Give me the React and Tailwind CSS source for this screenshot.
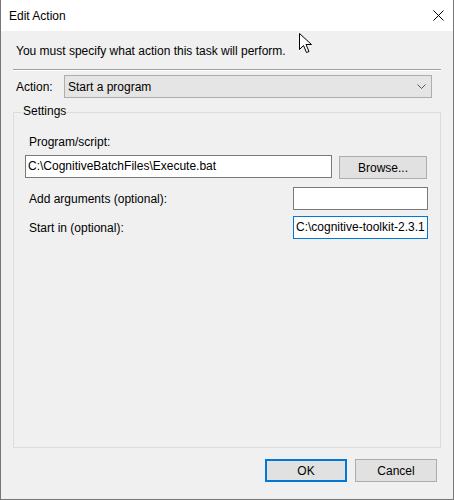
import React from 'react'

const font = { fontFamily: '"Liberation Sans", Arial, sans-serif' }

const TextBox = ({ value = '', focused = false, className = '' }) => (
  <div
    className={`h-[23px] bg-white border overflow-hidden whitespace-nowrap pl-[2px] leading-[21px] ${focused ? 'border-[#0078d7]' : 'border-[#7a7a7a]'} ${className}`}
  >
    {value}
  </div>
)

const Cursor = () => (
  <svg className="absolute left-[298px] top-[33px]" width="14" height="21" viewBox="0 0 14 21">
    <path
      d="M0.5 0.5 L0.5 16.5 L4.5 12.5 L7.5 19.5 L10 18.5 L7 11.5 L12.5 11.5 Z"
      fill="#fff"
      stroke="#000"
      strokeWidth="1"
      strokeLinejoin="miter"
    />
  </svg>
)

const App = () => {
  return (
    <div
      className="relative w-[454px] h-[500px] bg-[#f0f0f0] border-l border-r border-b border-[#777777] text-[12px] text-black overflow-hidden"
      style={font}
    >
      {/* title bar */}
      <div className="h-[31px] bg-white flex items-center justify-between pl-[8px] pr-[9px]">
        <span className="leading-[16px]">Edit Action</span>
        <svg width="11" height="11" viewBox="0 0 11 11">
          <path d="M0.5 0.5 L10.5 10.5 M10.5 0.5 L0.5 10.5" stroke="#000" strokeWidth="1" />
        </svg>
      </div>

      <div className="px-[12px]">
        <p className="mt-[12px] pl-[3px] leading-[16px]">You must specify what action this task will perform.</p>
        <div className="mt-[10px] border-t border-b border-t-[#a0a0a0] border-b-white" />

        <div className="mt-[4px] flex items-center h-[23px]">
          <span className="w-[51px] pl-[3px] leading-[16px]">Action:</span>
          <div className="w-[368px] h-[23px] bg-[#e5e5e5] border border-[#adadad] flex items-center justify-between pl-[3px] pr-[5px]">
            <span className="leading-[16px]">Start a program</span>
            <svg width="9" height="6" viewBox="0 0 9 6">
              <path d="M0.5 0.5 L4.5 4.5 L8.5 0.5" fill="none" stroke="#555" strokeWidth="1" />
            </svg>
          </div>
        </div>

        {/* settings group */}
        <div className="relative mt-[14px] h-[336px] border border-[#dcdcdc]">
          <span className="absolute left-[8px] top-[-10px] px-[1px] bg-[#f0f0f0] leading-[16px]">Settings</span>

          <div className="mt-[21px] pl-[15px] leading-[16px]">Program/script:</div>
          <div className="mt-[5px] flex items-start pl-[11px]">
            <TextBox value="C:\CognitiveBatchFiles\Execute.bat" className="w-[307px]" />
            <button className="ml-[7px] mt-[1px] w-[88px] h-[23px] bg-[#e1e1e1] border border-[#adadad] leading-[16px]">
              Browse...
            </button>
          </div>

          <div className="mt-[8px] flex items-center">
            <span className="w-[279px] pl-[15px] leading-[16px]">Add arguments (optional):</span>
            <TextBox className="w-[135px]" />
          </div>

          <div className="mt-[6px] flex items-center">
            <span className="w-[279px] pl-[15px] leading-[16px]">Start in (optional):</span>
            <TextBox value="C:\cognitive-toolkit-2.3.1" focused className="w-[135px]" />
          </div>
        </div>

        <div className="mt-[11px] flex justify-end gap-[8px] pr-[4px]">
          <button className="w-[82px] h-[23px] bg-[#e1e1e1] border-2 border-[#0078d7] leading-[16px]">OK</button>
          <button className="w-[82px] h-[23px] bg-[#e1e1e1] border border-[#adadad] leading-[16px]">Cancel</button>
        </div>
      </div>

      <Cursor />
    </div>
  )
}

export default App
